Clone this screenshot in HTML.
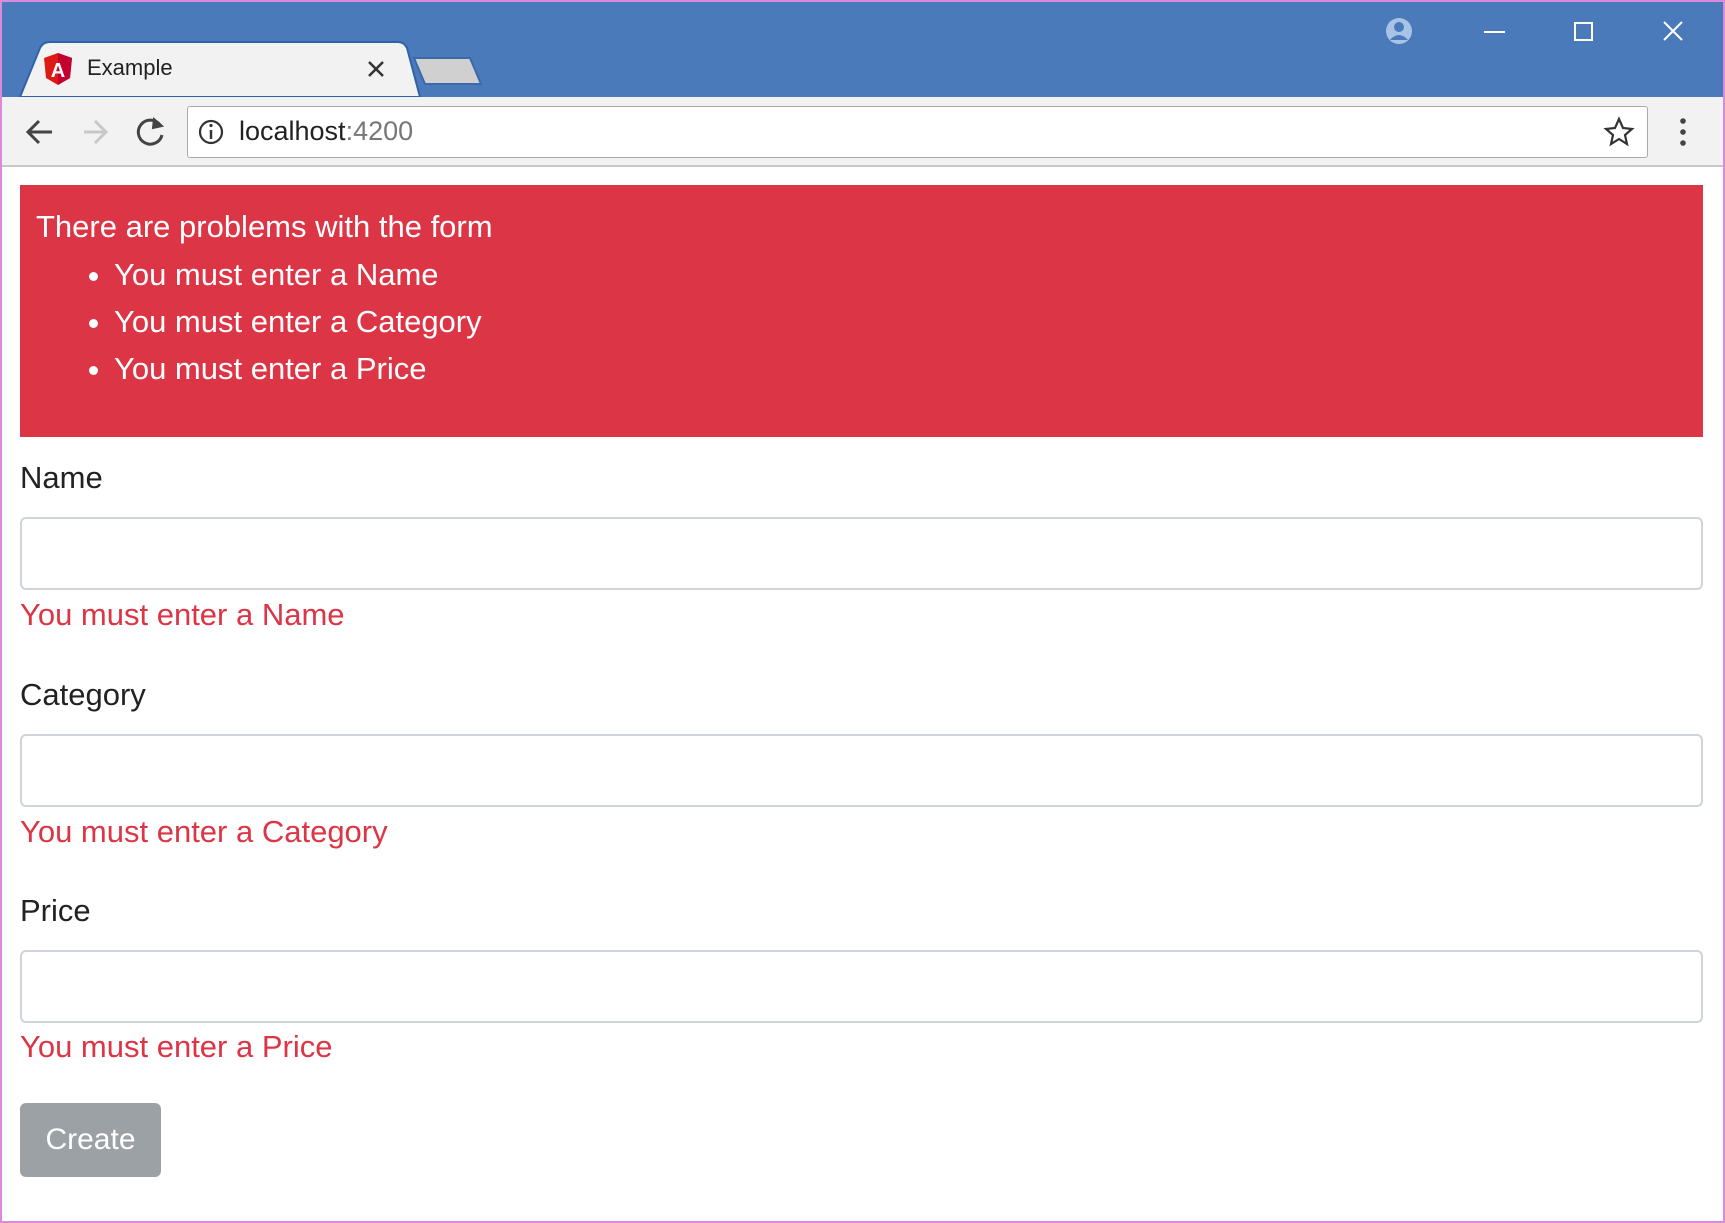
<!DOCTYPE html>
<html><head><meta charset="utf-8"><style>
*{margin:0;padding:0;box-sizing:border-box}
body{width:1725px;height:1223px;background:#fff;font-family:"Liberation Sans",sans-serif;position:relative;overflow:hidden}
.a{position:absolute}
.frame{left:0;top:0;width:1725px;height:1223px;border:2px solid #d98ad9}
.title{left:2px;top:2px;width:1721px;height:95px;background:#4a7aba}
.toolbar{left:2px;top:97px;width:1721px;height:70px;background:#f2f2f2;border-bottom:2px solid #c8c8c8}
.addr{left:187px;top:106px;width:1461px;height:52px;background:#fff;border:1px solid #a9a9a9;border-radius:3px}
.lbl{font-size:31px;color:#222;left:20px;white-space:nowrap}
.inp{left:20px;width:1683px;height:73px;border:2px solid #ced4da;border-radius:6px;background:#fff}
.err{left:20px;font-size:31px;color:#dc3545;white-space:nowrap}
.alert{left:20px;top:185px;width:1683px;height:252px;background:#dc3545;color:#fff;font-size:31px}
</style></head><body>
<div class="a title"></div>
<svg class="a" style="left:0;top:0" width="1725" height="170">
<path d="M20 97 L40 48 Q43 42 50 42 L398 42 Q404 42 407 48 L420 97 Z" fill="#f2f2f2" stroke="#2f63a8" stroke-width="2"/>
<path d="M414 58 L470 58 L481 84 L425 84 Z" fill="#d0d0d0" stroke="#3a6aab" stroke-width="2"/>
<path d="M58 53 L72 58 L70 78 L58 85 L46 78 L44 58 Z" fill="#dd1b16"/>
<path d="M58 53 L72 58 L70 78 L58 85 Z" fill="#c3002f"/>
<text x="58" y="77" font-family="Liberation Sans" font-weight="bold" font-size="20" fill="#fff" text-anchor="middle">A</text>
<path d="M369 62 L383 76 M383 62 L369 76" stroke="#333" stroke-width="2.5"/>
<circle cx="1399" cy="31" r="13" fill="#a9c3e6"/>
<circle cx="1399" cy="27" r="5" fill="#4a7aba"/>
<path d="M1390 40 Q1399 30 1408 40" fill="#4a7aba"/>
<path d="M1484 32 H1505" stroke="#fff" stroke-width="2"/>
<rect x="1575" y="23" width="17" height="17" fill="none" stroke="#fff" stroke-width="2"/>
<path d="M1664 22 L1682 40 M1682 22 L1664 40" stroke="#fff" stroke-width="2"/>
</svg>
<div class="a toolbar"></div>
<div class="a addr"></div>
<svg class="a" style="left:0;top:97px" width="1725" height="70">
<path d="M52 35 H28 M39 24 L28 35 L39 46" stroke="#444" stroke-width="3" fill="none"/>
<path d="M84 35 H106 M95 24 L106 35 L95 46" stroke="#c8c8c8" stroke-width="3" fill="none"/>
<path d="M160 28 A12 12 0 1 0 162 38" stroke="#444" stroke-width="3" fill="none"/>
<path d="M154 22 L162 29 L153 31 Z" fill="#444" stroke="#444" stroke-width="2"/>
<circle cx="211" cy="35" r="11" fill="none" stroke="#333" stroke-width="2.2"/>
<path d="M211 33 V42" stroke="#333" stroke-width="2.5"/><circle cx="211" cy="28.5" r="1.6" fill="#333"/>
<path d="M1619 22 L1623 31 L1632 32 L1625 38 L1627 47 L1619 42 L1611 47 L1613 38 L1606 32 L1615 31 Z" fill="none" stroke="#333" stroke-width="2.2"/>
<circle cx="1683" cy="24" r="2.8" fill="#444"/><circle cx="1683" cy="35" r="2.8" fill="#444"/><circle cx="1683" cy="46" r="2.8" fill="#444"/>
</svg>
<div class="a" style="left:87px;top:55px;font-size:22px;color:#222">Example</div>
<div class="a" style="left:239px;top:116px;font-size:27px;color:#222">localhost<span style="color:#777">:4200</span></div>
<div class="a alert">
<div class="a" style="left:16px;top:24px;white-space:nowrap">There are problems with the form</div>
<ul class="a" style="left:94px;top:66px;line-height:47px;white-space:nowrap">
<li>You must enter a Name</li><li>You must enter a Category</li><li>You must enter a Price</li></ul>
</div>
<div class="a lbl" style="top:460px">Name</div>
<div class="a inp" style="top:517px"></div>
<div class="a err" style="top:597px">You must enter a Name</div>
<div class="a lbl" style="top:677px">Category</div>
<div class="a inp" style="top:734px"></div>
<div class="a err" style="top:814px">You must enter a Category</div>
<div class="a lbl" style="top:893px">Price</div>
<div class="a inp" style="top:950px"></div>
<div class="a err" style="top:1029px">You must enter a Price</div>
<div class="a" style="left:20px;top:1103px;width:141px;height:74px;background:#9ca1a6;border-radius:6px;color:#fff;font-size:30px;text-align:center;line-height:74px">Create</div>
<div class="a frame"></div>
</body></html>
